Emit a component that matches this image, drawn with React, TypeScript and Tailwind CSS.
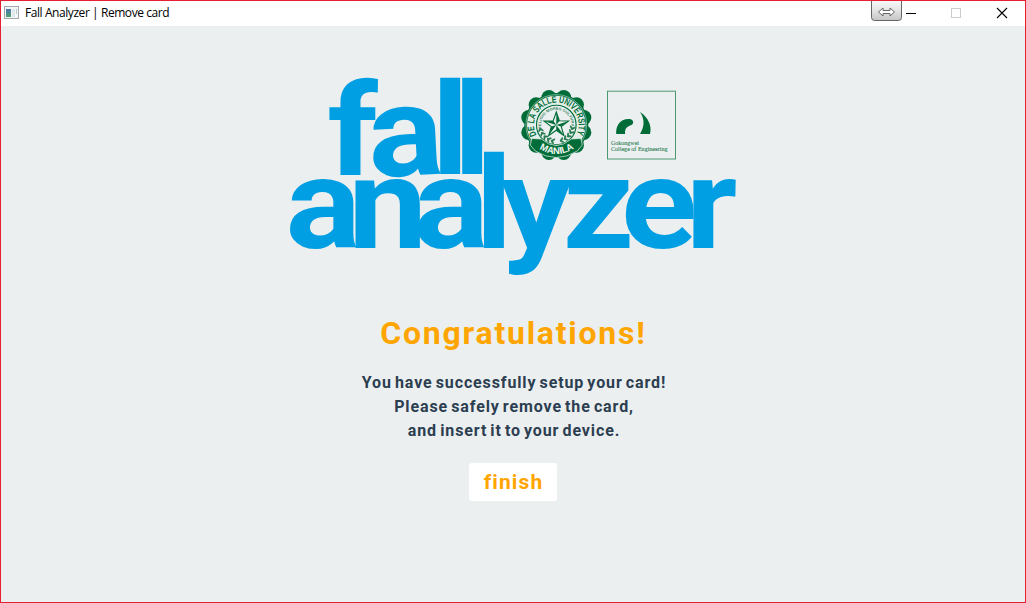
import React from "react";

type Glyph = { ch: string; x: number; y: number; rotate?: number };

const wordmark: Glyph[] = [
  { ch: "f", x: 327.6, y: 175 },
  { ch: "a", x: 369.8, y: 177.4, rotate: -3 },
  { ch: "l", x: 431.6, y: 174.4 },
  { ch: "l", x: 453.5, y: 174.4 },
  { ch: "a", x: 285.6, y: 247.8 },
  { ch: "n", x: 348.3, y: 247.8 },
  { ch: "a", x: 413.6, y: 247.8 },
  { ch: "l", x: 475.3, y: 247.6 },
  { ch: "y", x: 500.8, y: 247.8 },
  { ch: "z", x: 562.5, y: 247.8 },
  { ch: "e", x: 621, y: 247.8 },
  { ch: "r", x: 685.8, y: 247.8 },
];

const bumps = Array.from({ length: 12 }, (_, i) => ((i * 30 + 15) * Math.PI) / 180);
const star = (r: number) =>
  Array.from({ length: 10 }, (_, i) => {
    const a = (i * Math.PI) / 5 - Math.PI / 2;
    const d = i % 2 ? r * 0.4 : r;
    return `${(d * Math.cos(a)).toFixed(2)},${(d * Math.sin(a)).toFixed(2)}`;
  }).join(" ");
const leaves = [14, 29, 44, 59, 74, 106, 121, 136, 151, 166];

function Seal() {
  return (
    <g transform="translate(556.3 125)">
      <g fill="#006d38">
        <circle r="32" />
        {bumps.map((a) => (
          <circle key={a} cx={28.5 * Math.cos(a)} cy={28.5 * Math.sin(a)} r="7.500" />
        ))}
      </g>
      <circle r="30.400" fill="none" stroke="#8dbda4" strokeWidth="0.8" />
      <circle r="29.300" fill="#e5efea" />
      <circle r="19.8" fill="#ebeff0" stroke="#006d38" strokeWidth="1.1" />
      <path id="ring" d="M-19.8 10.2A22.3 22.3 0 1 1 19.8 10.2" fill="none" />
      <text fontSize="9.4" fontWeight="700" fill="#006d38" className="font-['Liberation_Sans']">
        <textPath href="#ring" textLength="90" lengthAdjust="spacingAndGlyphs">DE LA SALLE UNIVERSITY</textPath>
      </text>
      <path id="motto" d="M-14.8 4A15.3 15.3 0 1 1 14.8 4" fill="none" />
      <text fontSize="3.8" fontWeight="700" fill="#38845c" className="font-['Liberation_Sans']">
        <textPath href="#motto" textLength="53" lengthAdjust="spacingAndGlyphs">RELIGIO MORES CULTURA</textPath>
      </text>
      {leaves.map((d) => (
        <g key={d} transform={`rotate(${d}) translate(16.4 0)`} fill="#2b7e53">
          <ellipse cx="-1.5" rx="2.5" ry="1" transform="rotate(45)" />
          <ellipse cx="1.3" rx="2.5" ry="1" transform="rotate(-45)" />
        </g>
      ))}
      <polygon points={star(13)} fill="#ebeff0" stroke="#006d38" strokeWidth="1.1" />
      {[0, 72, 144, 216, 288].map((d) => (
        <path key={d} d="M0 0V-12.500L3 -4Z" fill="#006d38" transform={`rotate(${d})`} />
      ))}
      <path
        d="M-24.500 13.500L-15 14Q0 27 15 14L24.500 13.500L26 20L21 26Q0 39 -21 26L-26 20Z"
        fill="#006d38"
        stroke="#e5efea"
        strokeWidth="0.7"
      />
      <path id="banner" d="M-22 20.500Q0 37.500 22 20.500" fill="none" />
      <text fontSize="9.6" fontWeight="700" fill="#f2f7f4" className="font-['Liberation_Sans']">
        <textPath href="#banner" startOffset="6" textLength="37" lengthAdjust="spacingAndGlyphs">MANILA</textPath>
      </text>
    </g>
  );
}

function College() {
  return (
    <g>
      <rect x="607.5" y="91.2" width="68" height="67.8" fill="none" stroke="#4c9871" />
      <path d="M616.2 134C615.500 124 622 118 630 119C634 120 634.500 124.500 630 125.500C626 127 624.500 130 625.200 134Z" fill="#006d38" />
      <path d="M640 112C648 117 652.300 126 650 134H640C644.500 127 645 119 640 112Z" fill="#006d38" />
      <g fill="#2b7e53" fontSize="6.8" fontWeight="400" className="font-['Liberation_Serif']" stroke="#2b7e53" strokeWidth="0.1">
        <text x="611" y="144.700" textLength="28" lengthAdjust="spacingAndGlyphs">Gokongwei</text>
        <text x="611" y="151.300" textLength="56.500" lengthAdjust="spacingAndGlyphs">College of Engineering</text>
      </g>
    </g>
  );
}

function Logo() {
  return (
    <svg width="456" height="210" viewBox="286 70 456 210" className="block overflow-visible">
      <g fill="#009fe3" fontSize="128" fontWeight="700" className="font-[Roboto]">
        {wordmark.map((g, i) => (
          <text key={i} transform={`translate(${g.x} ${g.y}) rotate(${g.rotate ?? 0}) scale(1.1 1)`}>
            {g.ch}
          </text>
        ))}
      </g>
      <Seal />
      <College />
    </svg>
  );
}

function AppIcon() {
  return (
    <svg width="16" height="14" viewBox="0 0 16 14" className="block">
      <defs>
        <linearGradient id="pane" x2="0" y2="1">
          <stop offset="0" stopColor="#4a78b0" />
          <stop offset="1" stopColor="#4fa36c" />
        </linearGradient>
      </defs>
      <rect x="0.5" y="0.5" width="14" height="12" fill="#f3f5f6" stroke="#a3a8ac" />
      <rect x="2" y="3" width="5" height="8" fill="url(#pane)" />
      <rect x="8" y="3" width="3" height="8" fill="#e0eaee" />
      <rect x="12" y="3" width="1" height="5" fill="#b9cbd2" />
    </svg>
  );
}

function TitleBar() {
  return (
    <header className="flex h-[25px] shrink-0 items-start bg-white text-black">
      <div className="mt-[5px] ml-[3px]">
        <AppIcon />
      </div>
      <h1 className="mt-1 ml-[5px] font-['Open_Sans',sans-serif] text-[12px] leading-4 tracking-[-0.430px] whitespace-nowrap">
        Fall Analyzer | Remove card
      </h1>
      <svg width="156" height="25" viewBox="870 1 156 25" className="-mr-px ml-auto block">
        <defs>
          <linearGradient id="grip" x2="0" y2="1">
            <stop offset="0" stopColor="#f7f7f7" />
            <stop offset="0.45" stopColor="#e6e6e6" />
            <stop offset="1" stopColor="#c4c4c4" />
          </linearGradient>
        </defs>
        <path d="M871.500 1V17.500Q871.500 20.500 874.500 20.500H898.500Q901.500 20.500 901.500 17.500V1" fill="url(#grip)" stroke="#666" />
        <path d="M878.500 12L883 8V10.500H890V8L894.500 12L890 16V13.500H883V16Z" fill="#fff" stroke="#666" />
        <path d="M906 13.500H916" stroke="#000" />
        <rect x="951.500" y="8.500" width="9" height="9" fill="none" stroke="#ccc" />
        <path d="M997 8L1007 18M1007 8L997 18" stroke="#000" strokeWidth="1.100" />
      </svg>
    </header>
  );
}

export default function App() {
  return (
    <div className="flex h-[603px] w-[1026px] flex-col overflow-hidden border border-[#e81f30] bg-[#ebeff0] font-[Roboto,sans-serif]">
      <TitleBar />
      <main className="flex flex-col items-center pt-[44px] font-bold">
        <div className="ml-[2px]">
          <Logo />
        </div>
        <h2 className="mt-[33px] ml-[1px] text-[32px] leading-10 tracking-[1.750px] text-[#ffa500]">Congratulations!</h2>
        <p className="mt-[18px] ml-[2px] text-center text-[16px] leading-6 tracking-[0.880px] [word-spacing:-1.700px] text-[#2c3e50]">
          You have successfully setup your card!
          <br />
          Please safely remove the card,
          <br />
          and insert it to your device.
        </p>
        <button className="mt-5 h-[38px] w-[88px] rounded-[3px] bg-white pl-px text-[21px] leading-[38px] tracking-[1.100px] text-[#ffa500]">
          finish
        </button>
      </main>
    </div>
  );
}
